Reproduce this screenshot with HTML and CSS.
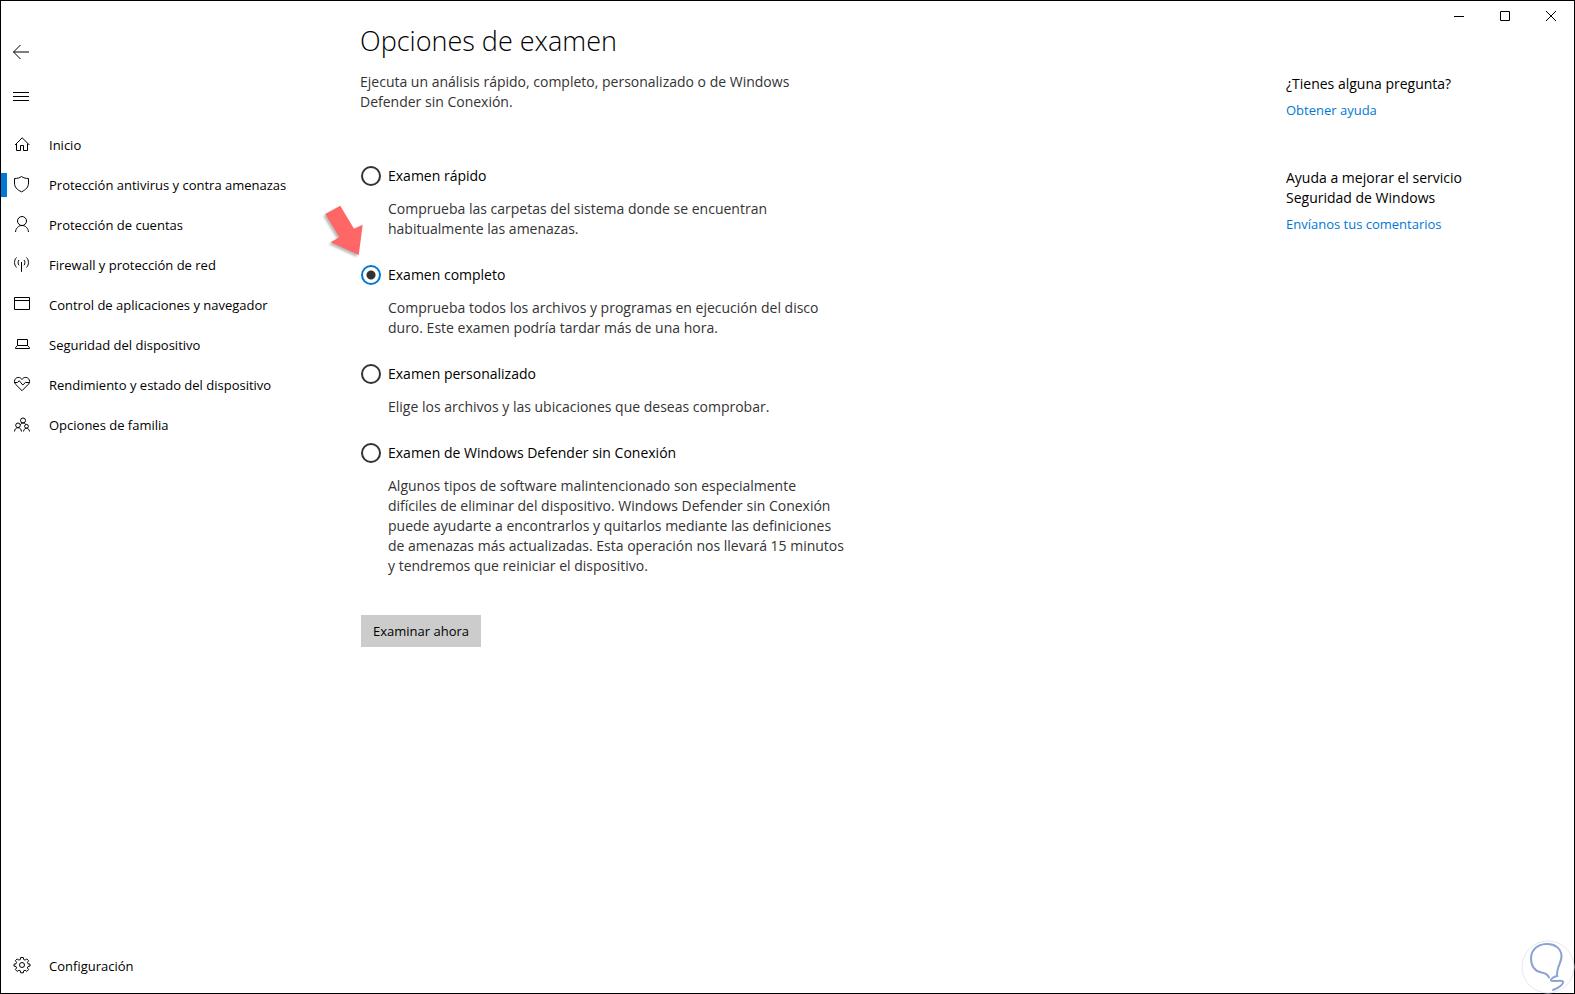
FILE: index.html
```html
<!DOCTYPE html>
<html lang="es">
<head>
<meta charset="utf-8">
<title>Seguridad de Windows</title>
<link rel="stylesheet" href="styles.css">
</head>
<body>
<div class="window">
  <aside class="sidebar">
    <button class="icon-button back" type="button" aria-label="Atrás">
      <svg class="icon" viewBox="0 0 20 20"><path d="M1.5 10H17M8.5 3 1.5 10l7 7"/></svg>
    </button>
    <button class="icon-button menu" type="button" aria-label="Menú">
      <svg class="icon" viewBox="0 0 20 20"><path d="M1 6.5h16M1 10.5h16M1 14.5h16"/></svg>
    </button>
    <nav class="nav">
      <a class="nav-item" href="#inicio">
        <svg class="icon" viewBox="0 0 20 20"><path d="M3 10 10.2 2.8 17.4 10M4.5 8.6v6.9h4v-5h3v5h4V8.6"/></svg>
        <span>Inicio</span>
      </a>
      <a class="nav-item active" href="#antivirus">
        <svg class="icon" viewBox="0 0 20 20"><path d="M9.5 1.5C7.5 3 5 3.500 2.500 3.500v4.500c0 4 2.500 6.800 7 8.800 4.500-2 7-4.800 7-8.800V3.500c-2.500 0-5-.5-7-2z"/></svg>
        <span>Protección antivirus y contra amenazas</span>
      </a>
      <a class="nav-item" href="#cuentas">
        <svg class="icon" viewBox="0 0 20 20"><circle cx="10" cy="6" r="4.5"/><path d="M3.500 17c.3-3.800 3-6.500 6.500-6.500s6.200 2.700 6.500 6.500"/></svg>
        <span>Protección de cuentas</span>
      </a>
      <a class="nav-item" href="#firewall">
        <svg class="icon" viewBox="0 0 20 20"><path d="M9.500 7v9.800M7 5c-1.200 1.300-1.200 4 0 5.300M12 5c1.200 1.300 1.200 4 0 5.300M4.500 2.500c-2.600 2.700-2.600 7.300 0 10M14.500 2.500c2.600 2.700 2.600 7.300 0 10"/></svg>
        <span>Firewall y protección de red</span>
      </a>
      <a class="nav-item" href="#aplicaciones">
        <svg class="icon" viewBox="0 0 20 20"><path d="M2.500 2.500h15v12h-15zM2.500 5.500h15"/></svg>
        <span>Control de aplicaciones y navegador</span>
      </a>
      <a class="nav-item" href="#dispositivo">
        <svg class="icon" viewBox="0 0 20 20"><path d="M5.500 4.500h10v6h-10zM5.500 10.500l-2 2.200v.8h14v-.8l-2-2.200"/></svg>
        <span>Seguridad del dispositivo</span>
      </a>
      <a class="nav-item" href="#rendimiento">
        <svg class="icon" viewBox="0 0 20 20"><path d="M10 4.500C8.500 2 5.300 1.800 3.600 3.600 2 5.200 2 7.700 3.600 9.300l6.400 6.400 6.400-6.400c1.600-1.600 1.600-4.100 0-5.700C14.700 1.800 11.500 2 10 4.500zM2.600 7.500h2.900l1.700-1.800 3.600 4.300 2.600-2.500h3.900"/></svg>
        <span>Rendimiento y estado del dispositivo</span>
      </a>
      <a class="nav-item" href="#familia">
        <svg class="icon" viewBox="0 0 20 20"><circle cx="11" cy="5.500" r="2.500"/><circle cx="6" cy="10.300" r="2.300"/><circle cx="14.500" cy="11.300" r="1.900"/><path d="M2.500 16.500c.2-2.300 1.500-3.800 3.500-3.800s3.300 1.500 3.500 3.800M11.500 16.500c.2-1.900 1.300-3.200 3-3.200s2.800 1.300 3 3.200M8.300 10c.6-1.300 1.500-2 2.700-2s2.300.6 3 1.500"/></svg>
        <span>Opciones de familia</span>
      </a>
    </nav>
    <a class="nav-item settings" href="#configuracion">
      <svg class="icon" viewBox="0 0 20 20"><circle cx="10" cy="9" r="2.500"/><path d="M8.700 1.500h2.600l.4 2 1.400.6 1.700-1.200 1.800 1.800-1.200 1.700.6 1.400 2 .4v1.900l-2 .4-.6 1.400 1.200 1.700-1.800 1.800-1.700-1.200-1.400.6-.4 2H8.700l-.4-2-1.400-.6-1.700 1.200-1.800-1.800 1.200-1.700-.6-1.400-2-.4V8.200l2-.4.6-1.400-1.200-1.700 1.800-1.800 1.700 1.200 1.400-.6z"/></svg>
      <span>Configuración</span>
    </a>
  </aside>

  <main class="content">
    <h1 class="title">Opciones de examen</h1>
    <p class="intro">Ejecuta un análisis rápido, completo, personalizado o de Windows<br>Defender sin Conexión.</p>
    <form class="scan-form">
      <div class="option">
        <label class="option-label"><input class="radio" type="radio" name="scan">Examen rápido</label>
        <p class="option-text">Comprueba las carpetas del sistema donde se encuentran<br>habitualmente las amenazas.</p>
      </div>
      <div class="option">
        <label class="option-label"><input class="radio" type="radio" name="scan" checked>Examen completo</label>
        <p class="option-text">Comprueba todos los archivos y programas en ejecución del disco<br>duro. Este examen podría tardar más de una hora.</p>
        <svg class="pointer" viewBox="0 0 44 56" aria-hidden="true"><path d="M20.300 4.700 34 27.700l8.700-4L38.700 54l-28-12.700 8.600-5L5.300 13z"/></svg>
      </div>
      <div class="option">
        <label class="option-label"><input class="radio" type="radio" name="scan">Examen personalizado</label>
        <p class="option-text">Elige los archivos y las ubicaciones que deseas comprobar.</p>
      </div>
      <div class="option">
        <label class="option-label"><input class="radio" type="radio" name="scan">Examen de Windows Defender sin Conexión</label>
        <p class="option-text">Algunos tipos de software malintencionado son especialmente<br>difíciles de eliminar del dispositivo. Windows Defender sin Conexión<br>puede ayudarte a encontrarlos y quitarlos mediante las definiciones<br>de amenazas más actualizadas. Esta operación nos llevará 15 minutos<br>y tendremos que reiniciar el dispositivo.</p>
      </div>
      <button class="scan-button" type="button">Examinar ahora</button>
    </form>
  </main>

  <aside class="right">
    <div class="caption-buttons">
      <button class="caption" type="button" aria-label="Minimizar"><svg class="glyph" viewBox="0 0 12 12"><path d="M1 6.500h10"/></svg></button>
      <button class="caption" type="button" aria-label="Maximizar"><svg class="glyph" viewBox="0 0 12 12"><path d="M1.500 1.500h9v9h-9z"/></svg></button>
      <button class="caption" type="button" aria-label="Cerrar"><svg class="glyph" viewBox="0 0 12 12"><path d="m1 1 10 10M11 1 1 11"/></svg></button>
    </div>
    <div class="help-list">
      <section class="help">
        <p class="help-title">¿Tienes alguna pregunta?</p>
        <a class="help-link" href="#ayuda">Obtener ayuda</a>
      </section>
      <section class="help">
        <p class="help-title">Ayuda a mejorar el servicio<br>Seguridad de Windows</p>
        <a class="help-link" href="#comentarios">Envíanos tus comentarios</a>
      </section>
    </div>
  </aside>

  <svg class="watermark" viewBox="0 0 54 54" aria-hidden="true">
    <circle class="ring" cx="27" cy="27" r="26"/>
    <path class="bulb" d="M28 37.500c-1.500-3.500-4-4.500-7.500-5C13 31 10 25 10 18 10.500 9 17 4.500 25 4c9-.5 15 4.500 15.500 11.500.5 7-5.500 12-4.300 20.500-3.700.8-6.700 3-6.200 4.500.8 1.600 10.500-1 12 1 1 2.300-4.500 6.700-10 8.500"/>
  </svg>
</div>
</body>
</html>
```
FILE: styles.css
```css
* {
  box-sizing: border-box;
}

body {
  margin: 0;
  font-family: "Open Sans", "Noto Sans", sans-serif;
  font-size: 14px;
  line-height: 20px;
  color: #000;
  background: #fff;
}

h1,
p {
  margin: 0;
}

button {
  padding: 0;
  border: 0;
  background: none;
  font: inherit;
  color: inherit;
}

.window {
  position: relative;
  display: grid;
  grid-template-columns: 359px 1fr 288px;
  min-height: 100vh;
  border: 1px solid #000;
}

.sidebar {
  display: flex;
  flex-direction: column;
  padding: 31px 0 7px;
}

.icon-button {
  display: flex;
  align-items: center;
  width: 48px;
  height: 40px;
  padding-left: 11px;
}

.menu {
  margin-top: 4px;
}

.icon {
  flex: none;
  width: 20px;
  height: 20px;
  fill: none;
  stroke: #000;
  stroke-width: 1;
}

.nav {
  margin-top: 9px;
}

.nav-item {
  display: flex;
  align-items: center;
  gap: 17px;
  height: 40px;
  padding-left: 11px;
  font-size: 13px;
  color: #000;
  text-decoration: none;
}

.active {
  padding-left: 5px;
}

.active::before {
  content: "";
  width: 6px;
  height: 24px;
  margin: 0 -12px 0 -5px;
  background: #0078d7;
}

.settings {
  margin-top: auto;
}

.content {
  padding-top: 20px;
}

.title {
  font-size: 27px;
  font-weight: 300;
  line-height: 40px;
}

.intro {
  margin-top: 11px;
  color: #333;
}

.scan-form {
  margin-top: 48px;
}

.option {
  position: relative;
  padding-bottom: 20px;
}

.option-label {
  display: flex;
  align-items: center;
  gap: 7px;
  height: 32px;
}

.radio {
  appearance: none;
  width: 20px;
  height: 20px;
  margin: 0 0 0 1px;
  border: 2px solid #333;
  border-radius: 50%;
  background: #fff;
}

.radio:checked {
  border-color: #0078d7;
  background: radial-gradient(circle, #333 0 4px, #fff 5px);
}

.option-text {
  margin-top: 7px;
  padding-left: 28px;
  color: #333;
}

.pointer {
  position: absolute;
  left: -40px;
  top: -58px;
  width: 44px;
  height: 56px;
  fill: #f66;
  filter: drop-shadow(-2px 2px 1px #bbb);
}

.scan-button {
  height: 32px;
  margin: 19px 0 0 1px;
  padding: 0 12px;
  background: #ccc;
  font-size: 13px;
}

.caption-buttons {
  display: flex;
  justify-content: flex-end;
  height: 30px;
}

.caption {
  display: flex;
  align-items: center;
  justify-content: center;
  width: 46px;
}

.glyph {
  width: 12px;
  height: 12px;
  fill: none;
  stroke: #000;
  stroke-width: 1;
}

.help-list {
  display: grid;
  gap: 48px;
  padding-top: 43px;
}

.help-link {
  display: inline-block;
  margin-top: 6px;
  font-size: 13px;
  color: #0078d7;
  text-decoration: none;
}

.watermark {
  position: absolute;
  right: -1px;
  bottom: -1px;
  width: 54px;
  height: 54px;
  fill: none;
}

.ring {
  stroke: #e4e8f2;
  stroke-width: 1;
}

.bulb {
  stroke: #8ca3d4;
  stroke-width: 2;
  stroke-linecap: round;
}
```
